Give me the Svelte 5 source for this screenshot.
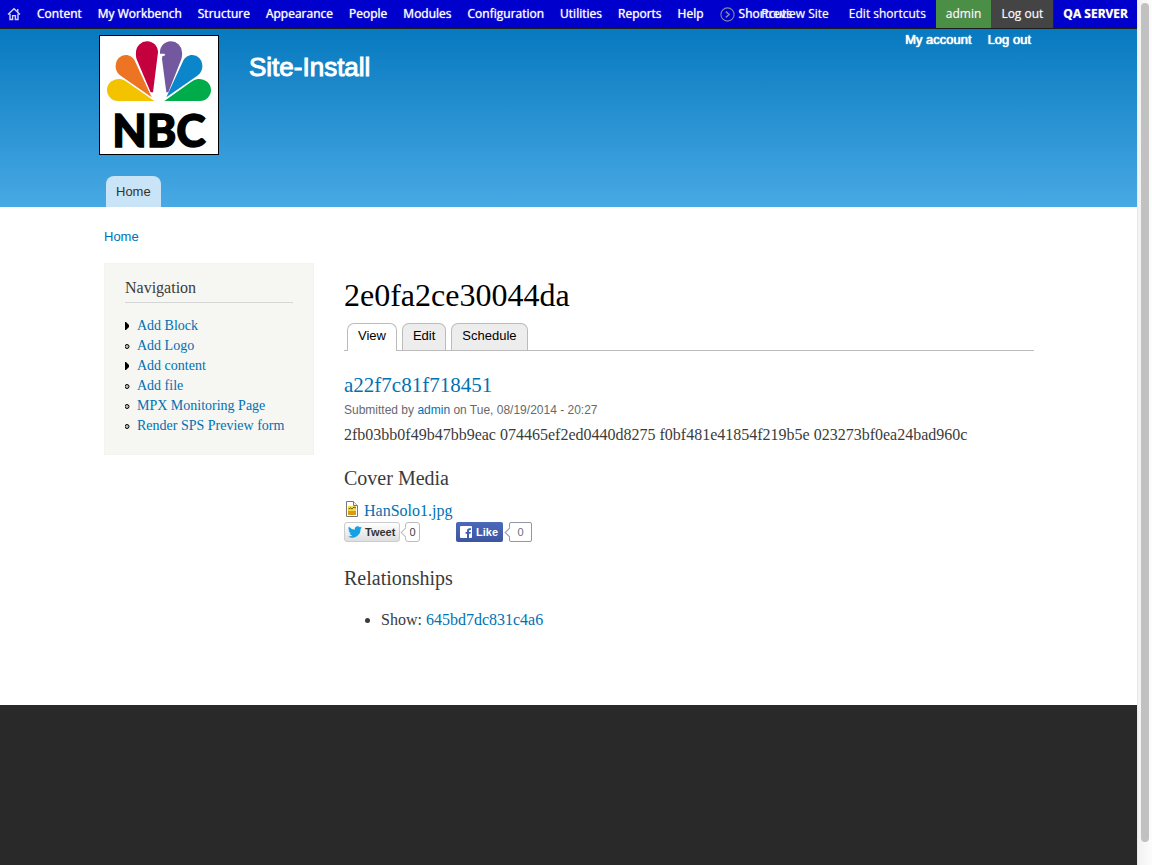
<script>
  const menu = ['Content', 'My Workbench', 'Structure', 'Appearance', 'People', 'Modules', 'Configuration', 'Utilities', 'Reports', 'Help'];
  const tabs = ['View', 'Edit', 'Schedule'];
  const links = [
    { label: 'Add Block', collapsed: true },
    { label: 'Add Logo', collapsed: false },
    { label: 'Add content', collapsed: true },
    { label: 'Add file', collapsed: false },
    { label: 'MPX Monitoring Page', collapsed: false },
    { label: 'Render SPS Preview form', collapsed: false }
  ];
</script>

<div class="window">
  <div class="page">
    <div class="toolbar">
      <nav class="menu">
        <a href="#home" class="house" aria-label="Administration home">
          <svg width="14" height="14" viewBox="0 0 14 14" fill="none" stroke="#d3d3f2" stroke-width="1.4">
            <path d="M1 7.600 7 1.800l6 5.800M3 6.800v5.700h2.600V8.600h2.800v3.900H11V6.800M10.700 5V2" />
          </svg>
        </a>
        {#each menu as item}
          <a href="#menu">{item}</a>
        {/each}
        <a href="#shortcuts" class="shortcuts">
          <svg width="15" height="15" viewBox="0 0 15 15" fill="none">
            <circle cx="7.5" cy="7.5" r="6.6" stroke="#8585a8" stroke-width="1.1" />
            <path d="m5.800 4.600 3.400 2.900-3.400 2.900" stroke="#8585a8" stroke-width="1.5" />
          </svg>
          Shortcuts
        </a>
      </nav>
      <nav class="actions">
        <a href="#preview">Preview Site</a>
        <a href="#edit-shortcuts">Edit shortcuts</a>
        <a href="#admin" class="user">admin</a>
        <a href="#logout" class="logout">Log out</a>
        <strong>QA SERVER</strong>
      </nav>
    </div>

    <header>
      <div class="container">
        <div class="brand">
          <a href="#front" class="logo" aria-label="Home page">
            <svg viewBox="3 3 354 354">
              <path fill="#f3c300" d="M166 198H57A33 33 0 0 1 24 165C24 142 45 130 64 132Q74 133 84 141Z" />
              <path fill="#ec7423" d="M158 187 65 122C53 114 49 101 50 90A31 31 0 0 1 80 60C92 60 104 68 108 79Z" />
              <path fill="#c4003f" d="M155 172 114 75C111 68 110 59 111 51A33 33 0 0 1 144 19C164 19 177 34 177 52L162 172Z" />
              <path fill="#7358a0" d="m202 172-13-100 1-8 9-3-3-5h-13V52C183 34 196 19 216 19A33 33 0 0 1 249 51C250 59 249 68 246 75L208 172Z" />
              <path fill="#0b86cb" d="m202 187 50-108C256 68 268 60 280 60A31 31 0 0 1 310 90C311 101 307 114 295 122Z" />
              <path fill="#00ab4a" d="M196 198H303A33 33 0 0 0 336 165C336 142 315 130 296 132Q286 133 276 141Z" />
              <text x="180" y="336" text-anchor="middle">NBC</text>
            </svg>
          </a>
          <div class="site-name">Site-Install</div>
          <nav class="account">
            <a href="#account">My account</a>
            <a href="#logout">Log out</a>
          </nav>
        </div>
        <nav class="main-menu"><a href="#home">Home</a></nav>
      </div>
    </header>

    <div class="container body">
      <nav class="breadcrumb"><a href="#home">Home</a></nav>
      <div class="columns">
        <aside>
          <h2>Navigation</h2>
          <ul>
            {#each links as link}
              <li>
                <svg width="6" height="8" viewBox="0 0 6 8">
                  {#if link.collapsed}
                    <path d="M0 0h1l3 3v2L1 8H0z" />
                  {:else}
                    <circle cx="2" cy="4.5" r="2" fill="#bbb" stroke="#000" />
                  {/if}
                </svg>
                <a href="#nav">{link.label}</a>
              </li>
            {/each}
          </ul>
        </aside>

        <main>
          <h1>2e0fa2ce30044da</h1>
          <nav class="tabs">
            {#each tabs as tab, i}
              <a href="#tab" class:active={i === 0}>{tab}</a>
            {/each}
          </nav>
          <article>
            <h2><a href="#node">a22f7c81f718451</a></h2>
            <p class="submitted">Submitted by <a href="#admin">admin</a> on Tue, 08/19/2014 - 20:27</p>
            <p class="text">2fb03bb0f49b47bb9eac 074465ef2ed0440d8275 f0bf481e41854f219b5e 023273bf0ea24bad960c</p>
            <h3>Cover Media</h3>
            <div class="file">
              <svg width="16" height="18" viewBox="0 0 16 18">
                <path d="M2.500 1.500h7l4 4v11h-11z" fill="#fff" stroke="#777" />
                <path d="M9.500 1.500v4h4" fill="#eee" stroke="#777" />
                <path fill="#f4d94b" d="M4 6h8v9H4z" />
                <path fill="#d99b13" d="M4 11h8v4H4z" />
                <path d="m4.500 9 2-1 1.500 1L10 7l2 1" fill="none" stroke="#705b18" />
              </svg>
              <a href="#file">HanSolo1.jpg</a>
            </div>
            <div class="social">
              <button class="tweet">
                <svg width="14" height="12" viewBox="0 0 24 20">
                  <path fill="#16a1e2" d="M24 2.400a10 10 0 0 1-2.800.8A5 5 0 0 0 23.300.5a10 10 0 0 1-3.100 1.200A4.900 4.900 0 0 0 11.800 6.200 14 14 0 0 1 1.700 1a4.900 4.900 0 0 0 1.500 6.600A5 5 0 0 1 1 7a4.900 4.900 0 0 0 3.900 4.900 5 5 0 0 1-2.200.1 4.900 4.900 0 0 0 4.600 3.400A9.900 9.900 0 0 1 0 17.500 14 14 0 0 0 21.500 5z" />
                </svg>
                Tweet
              </button>
              <span class="count tweets">0</span>
              <button class="like">
                <svg width="12" height="12" viewBox="0 0 12 12">
                  <path fill="#fff" d="M1 0h10a1 1 0 0 1 1 1v10a1 1 0 0 1-1 1H9V7.700h1.600l.2-1.800H9V5q0-1 1-1h1V2.200H9.500Q7 2.200 7 4.700v1.200H5.500v1.800H7V12H1a1 1 0 0 1-1-1V1a1 1 0 0 1 1-1z" />
                </svg>
                Like
              </button>
              <span class="count likes">0</span>
            </div>
            <h3>Relationships</h3>
            <ul class="relations"><li>Show: <a href="#show">645bd7dc831c4a6</a></li></ul>
          </article>
        </main>
      </div>
    </div>
    <footer></footer>
  </div>
  <div class="scrollbar"><div class="thumb"></div></div>
</div>

<style>
  :global(body) { margin: 0; }
  * { box-sizing: border-box; }
  a { color: #0071b3; text-decoration: none; }
  h1, h2, h3, p, ul { margin: 0; padding: 0; font-weight: 400; }
  svg { display: block; flex: none; }

  .window { display: flex; min-height: 100vh; color: #3b3b3b; font-family: "Liberation Serif", serif; background: #fff; }
  .page { flex: 1; min-width: 0; display: flex; flex-direction: column; }
  .container { width: 100%; max-width: 961px; margin: 0 auto; padding: 0 15px 0 16px; }

  .toolbar { display: flex; height: 29px; border-bottom: 1px solid #1c1c1c; background: #0000cd; font: 12px/28px "Open Sans", sans-serif; white-space: nowrap; }
  .toolbar a { color: #fafaff; }
  .menu { flex: 1; min-width: 0; display: flex; padding-left: 7px; gap: 16px; text-shadow: 0 0 1px #fff; }
  .house { display: flex; align-items: center; }
  .shortcuts { display: flex; align-items: center; gap: 4px; }
  .actions { position: relative; flex: none; display: flex; text-shadow: 0 0 1px #aaa; }
  .actions a { padding: 0 10px; }
  .actions .user { background: #4b8e46; }
  .actions .logout { background: #444; border-right: 1px solid #222; }
  strong { padding: 0 9px; color: #fff; font-weight: 700; }

  header { background: linear-gradient(#0779bf, #48a9e4); font-family: "Liberation Sans", sans-serif; }
  .brand { display: flex; align-items: flex-start; height: 147px; }
  .logo { width: 120px; height: 120px; margin: 6px 30px 0 -5px; border: 1px solid #000; background: #fff; }
  .logo text { font: 900 134px Lato, sans-serif; fill: #000; stroke: #000; stroke-width: 4px; }
  .site-name { flex: 1; padding-top: 23px; color: #fff; font-size: 26px; line-height: 30px; -webkit-text-stroke: 1px #fff; }
  .account { display: flex; gap: 16px; padding: 3px 3px 0 0; font-size: 13px; line-height: 16px; text-shadow: 0 0 1px #fff, 0 0 1px #fff; }
  .account a { color: #fff; }
  .main-menu { display: flex; padding-left: 2px; }
  .main-menu a { height: 31px; padding: 0 10px; border-radius: 8px 8px 0 0; background: #c8e4f6; color: #333; font-size: 13px; line-height: 31px; }

  .body { padding-bottom: 74px; }
  .breadcrumb { padding: 22px 0 18px; font: 13px/16px "Liberation Sans", sans-serif; }
  .columns { display: flex; align-items: flex-start; gap: 30px; }
  aside { flex: none; width: 210px; padding: 14px 20px; border: 1px solid #f3f4ee; background: #f6f6f2; font-size: 14px; }
  aside h2 { padding-bottom: 4px; border-bottom: 1px solid #d6d6d6; font-size: 16px; line-height: 20px; }
  aside ul { padding: 13px 0 4px; list-style: none; }
  aside li { display: flex; align-items: center; gap: 6px; line-height: 20px; }

  main { flex: 1; min-width: 0; padding-top: 14px; }
  h1 { color: #000; font-size: 32px; line-height: 36px; }
  .tabs { display: flex; gap: 5px; margin-top: 10px; padding-left: 3px; border-bottom: 1px solid #bbb; font: 13px/24px "Liberation Sans", sans-serif; }
  .tabs a { height: 27px; padding: 0 10px; border: 1px solid #bbb; border-bottom: 0; border-radius: 7px 7px 0 0; background: #ededed; color: #000; }
  .tabs .active { height: 28px; margin-bottom: -1px; background: #fff; }
  article h2 { margin-top: 20px; font-size: 21px; line-height: 28px; }
  .submitted { margin-top: 4px; color: #68696b; font: 12px/14px "Liberation Sans", sans-serif; }
  .text { margin-top: 8px; font-size: 16px; line-height: 20px; }
  h3 { margin-top: 22px; font-size: 20px; line-height: 22px; }
  .file { display: flex; align-items: flex-start; gap: 4px; margin-top: 11px; font-size: 16px; line-height: 22px; }
  .social { display: flex; font: 11px/18px "Liberation Sans", sans-serif; }
  .social + h3 { margin-top: 25px; }
  button { display: flex; align-items: center; gap: 3px; height: 20px; border: 0; border-radius: 3px; font: bold 11px/18px "Liberation Sans", sans-serif; }
  .tweet { width: 56px; padding: 0 3px; border: 1px solid #ccc; background: linear-gradient(#fff, #dedede); color: #333; }
  .like { width: 47px; gap: 4px; margin-left: 36px; padding: 0 4px; border-radius: 2px; background: linear-gradient(#4c69ba, #3b55a0); color: #fff; }
  .count { position: relative; height: 20px; margin-left: 5px; border: 1px solid #bbb; border-radius: 3px; text-align: center; }
  .count::before { content: ""; position: absolute; left: -4px; top: 6px; width: 6px; height: 6px; border: solid #bbb; border-width: 0 0 1px 1px; background: #fff; transform: rotate(45deg); }
  .tweets { width: 15px; }
  .likes { width: 23px; margin-left: 6px; border-color: #9197a3; border-radius: 2px; color: #6a7180; }
  .likes::before { border-color: #9197a3; }
  .relations { margin-top: 20px; padding-left: 37px; font-size: 16px; line-height: 22px; }

  footer { flex: 1; min-height: 160px; background: #292929; }
  .scrollbar { flex: none; width: 15px; padding: 3px 3px 23px; border-left: 1px solid #e8e8e8; background: linear-gradient(90deg, #f2f2f2, #fcfcfc); display: flex; }
  .thumb { flex: 1; border-radius: 4px; background: #c1c1c1; }
</style>
